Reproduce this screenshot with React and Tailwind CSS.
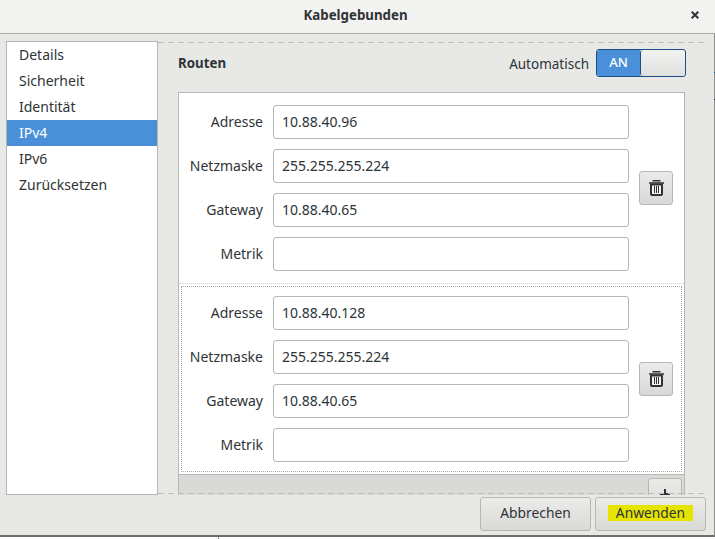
const FONT = "font-['Noto_Sans','Open_Sans',sans-serif]";

const menu = ["Details", "Sicherheit", "Identität", "IPv4", "IPv6", "Zurücksetzen"];

function Trash() {
  return (
    <button className="w-[34px] h-[34px] rounded-[3px] border border-[#b6b6b3] bg-gradient-to-b from-[#ebebe9] to-[#d8d8d6] flex items-center justify-center">
      <svg width="15" height="16" viewBox="0 0 15 16" fill="none">
        <path d="M3.5 .75h8M0 3h15" stroke="#2e3436" strokeWidth="1.5" />
        <path d="M2 4.5h11v9.5a1 1 0 0 1-1 1H3a1 1 0 0 1-1-1z" fill="#f4f4f3" stroke="#2e3436" strokeWidth="2" />
        <path d="M5.5 6v7M7.5 6v7M9.5 6v7" stroke="#2e3436" strokeWidth="1" />
      </svg>
    </button>
  );
}

function Field({ label, value }) {
  return (
    <div className="flex items-center h-[34px]">
      <div className="w-[84px] text-right text-[14px] text-[#2e3436] pb-[2px]">{label}</div>
      <div className="ml-[10px] w-[356px] h-[34px] bg-white border border-[#b6b6b3] rounded-[3px] pl-[8px] pb-[2px] flex items-center text-[14px] text-[#2e3436]">
        {value}
      </div>
    </div>
  );
}

function Route({ a, n, g }) {
  return (
    <div className="flex items-center">
      <div className="flex flex-col gap-[10px]">
        <Field label="Adresse" value={a} />
        <Field label="Netzmaske" value={n} />
        <Field label="Gateway" value={g} />
        <Field label="Metrik" value="" />
      </div>
      <div className="ml-[10px]">
        <Trash />
      </div>
    </div>
  );
}

const dash = "h-px bg-[repeating-linear-gradient(90deg,#bdbdba_0_6px,transparent_6px_10px)]";

function Btn({ children }) {
  return (
    <button className="w-[111px] h-[34px] rounded-[3px] border border-[#b6b6b3] bg-gradient-to-b from-[#ebebe9] to-[#d9d9d7] text-[13.8px] text-[#2e3436] flex items-center justify-center pb-[2px]">
      {children}
    </button>
  );
}

export default function App() {
  return (
    <div className={`${FONT} relative w-[715px] h-[539px] bg-white overflow-hidden flex flex-col`}>
      <div className="h-[34px] shrink-0 bg-[#f3f3f2] border-b border-[#a8a8a6] flex items-center justify-center relative pr-[4px] pb-[1px]">
        <span className="text-[13.3px] font-bold text-[#2e3436]">Kabelgebunden</span>
        <svg className="absolute left-[691px] top-[11px]" width="8" height="8" viewBox="0 0 8 8">
          <path d="M.7.7l6.6 6.6M7.3.7L.7 7.3" stroke="#2e3436" strokeWidth="2" />
        </svg>
      </div>
      <div className="h-[503px] shrink-0 w-[715px] bg-[#e8e8e7] border-b-2 border-r border-b-[#6d6e6c] border-r-[#8f8f8d] flex flex-col">
        <div className="h-[454px] mt-[7px] flex shrink-0">
          <div className="ml-[6px] w-[152px] h-[454px] bg-white border border-[#b6b6b3] flex flex-col shrink-0">
            {menu.map((m) => (
              <div
                key={m}
                className={`h-[26px] pl-[12px] pb-[2px] flex items-center text-[14px] ${m === "IPv4" ? "bg-[#4a90d9] text-white" : "text-[#2e3436]"}`}
              >
                {m}
              </div>
            ))}
          </div>
          <div className="relative w-[547px] mt-[1px] h-[453px] flex flex-col overflow-hidden">
            <div className={`${dash} shrink-0`} />
            <div className="flex-1 pl-[20px] pr-[20px] min-h-0 overflow-hidden">
              <div className="h-[40px] mb-[9px] flex items-center justify-between">
                <span className="text-[13.3px] font-bold text-[#2e3436] pt-[2px]">Routen</span>
                <div className="flex items-center gap-[7px] -mr-[1px]">
                  <span className="text-[13.5px] text-[#2e3436] pt-[2px]">Automatisch</span>
                  <div className="w-[90px] h-[28px] rounded-[3px] border border-[#1b4f86] flex overflow-hidden">
                    <div className="w-[43px] bg-[#4a90d9] text-white text-[13px] font-medium flex items-center justify-center">AN</div>
                    <div className="flex-1 rounded-[3px] border-l border-[#1b4f86] bg-gradient-to-b from-[#f2f2f1] to-[#e0e0de]" />
                  </div>
                </div>
              </div>
              <div className="w-[507px] bg-white border-x border-t border-[#b6b6b3]">
                <div className="h-[191px] pt-[12px] border-b border-[#e4e4e2]">
                  <Route a="10.88.40.96" n="255.255.255.224" g="10.88.40.65" />
                </div>
                <div className="h-[190px] p-[2px]">
                  <div className="h-[186px] border border-dotted border-[#a8a8a6] pt-[9px]">
                    <div className="-ml-[3px]">
                      <Route a="10.88.40.128" n="255.255.255.224" g="10.88.40.65" />
                    </div>
                  </div>
                </div>
              </div>
              <div className="w-[507px] h-[40px] bg-[#d9d9d7] border border-[#b6b6b3] pt-[3px] pl-[469px]">
                <button className="w-[34px] h-[34px] rounded-[3px] border border-[#b6b6b3] bg-gradient-to-b from-[#ebebe9] to-[#d8d8d6] flex items-center justify-center pb-[2px]">
                  <svg width="10" height="10" viewBox="0 0 10 10">
                    <path d="M5 0v10M0 5h10" stroke="#2e3436" strokeWidth="2" />
                  </svg>
                </button>
              </div>
            </div>
            <div className={`${dash} absolute left-0 right-0 bottom-[1px]`} />
          </div>
        </div>
        <div className="flex justify-end gap-[4px] pr-[8px] mt-[2px]">
          <Btn>Abbrechen</Btn>
          <Btn>
            <span className="bg-[#e5e500] px-[8px] py-0 leading-[16px]">Anwenden</span>
          </Btn>
        </div>
      </div>
      <div className="absolute left-[714px] top-[72px] w-px h-px bg-[#1b4f86]" />
      <div className="absolute left-[714px] top-[99px] w-px h-px bg-[#2e3436]" />
      <div className="absolute left-[218px] top-[537px] w-px h-[2px] bg-[#8f8f8d]" />
    </div>
  );
}
